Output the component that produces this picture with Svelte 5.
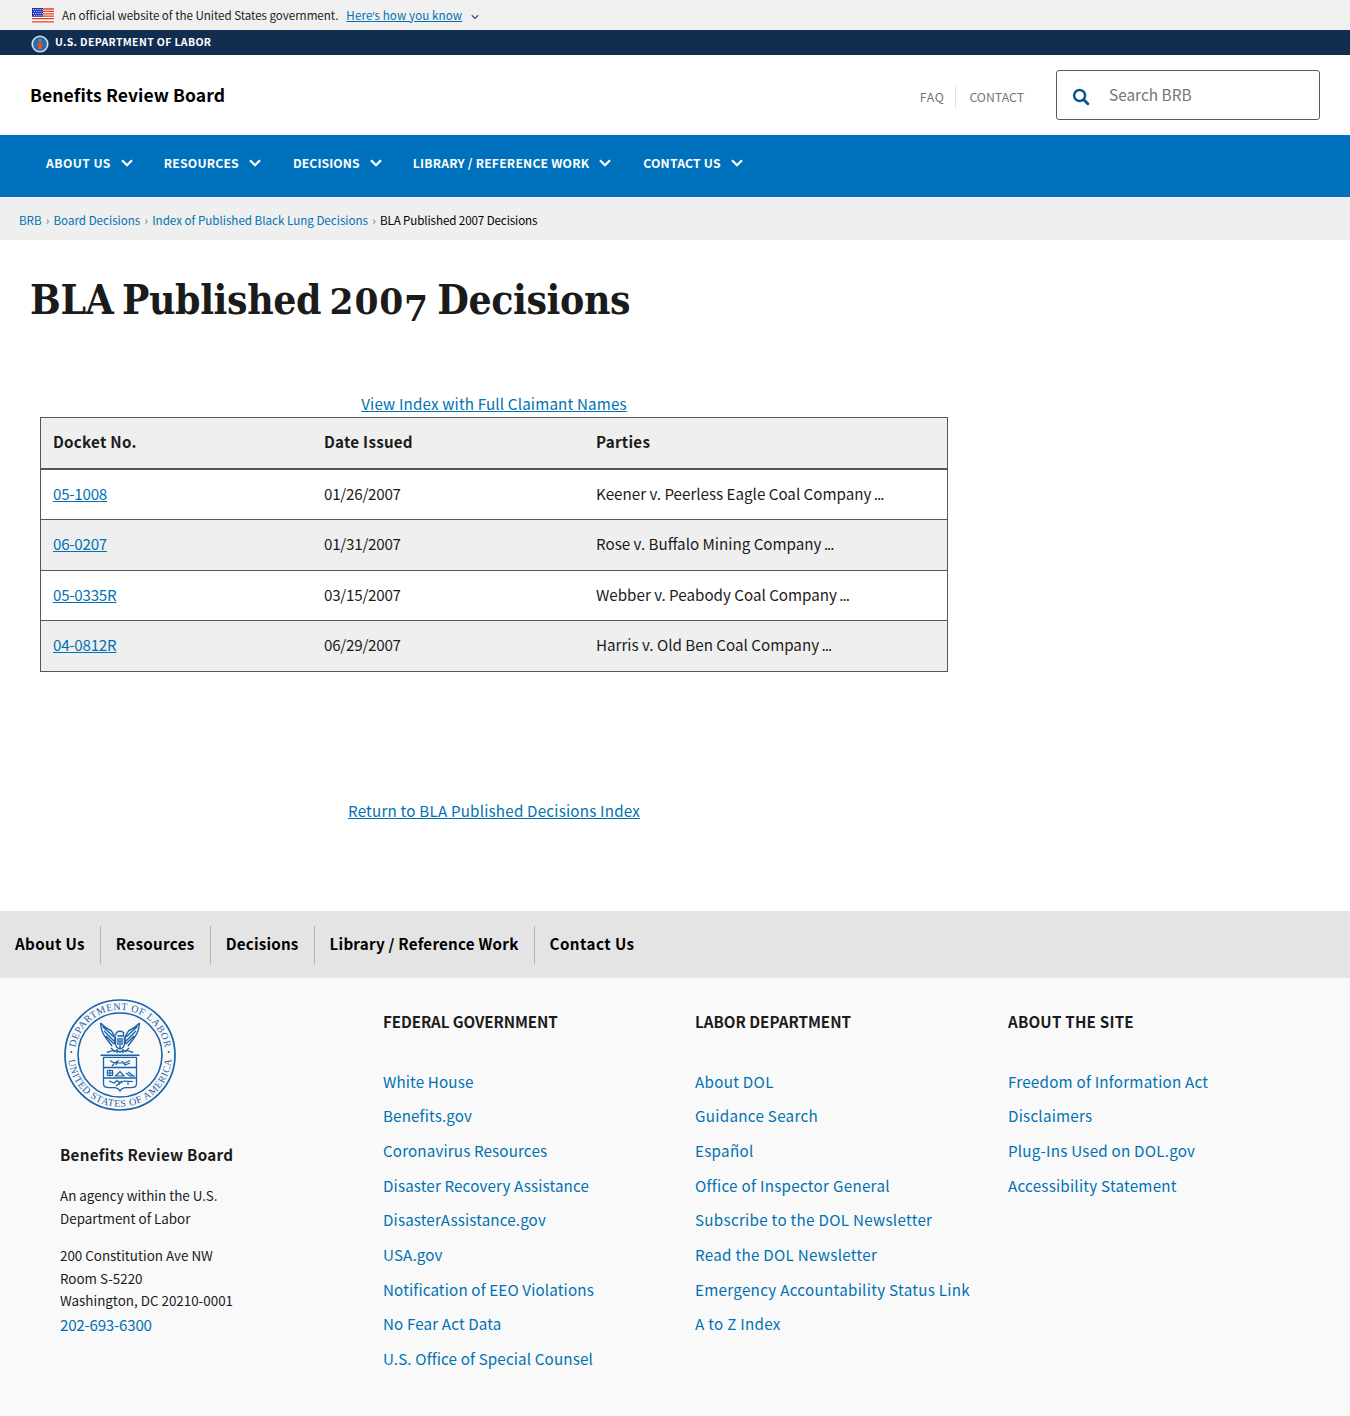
<script>
  const navItems = ['About Us', 'Resources', 'Decisions', 'Library / Reference Work', 'Contact Us'];
  const crumbs = ['BRB', 'Board Decisions', 'Index of Published Black Lung Decisions'];
  const rows = [
    ['05-1008', '01/26/2007', 'Keener v. Peerless Eagle Coal Company'],
    ['06-0207', '01/31/2007', 'Rose v. Buffalo Mining Company'],
    ['05-0335R', '03/15/2007', 'Webber v. Peabody Coal Company'],
    ['04-0812R', '06/29/2007', 'Harris v. Old Ben Coal Company']
  ];
  const columns = [
    {
      title: 'FEDERAL GOVERNMENT',
      links: ['White House', 'Benefits.gov', 'Coronavirus Resources', 'Disaster Recovery Assistance', 'DisasterAssistance.gov', 'USA.gov', 'Notification of EEO Violations', 'No Fear Act Data', 'U.S. Office of Special Counsel']
    },
    {
      title: 'LABOR DEPARTMENT',
      links: ['About DOL', 'Guidance Search', 'Español', 'Office of Inspector General', 'Subscribe to the DOL Newsletter', 'Read the DOL Newsletter', 'Emergency Accountability Status Link', 'A to Z Index']
    },
    {
      title: 'ABOUT THE SITE',
      links: ['Freedom of Information Act', 'Disclaimers', 'Plug-Ins Used on DOL.gov', 'Accessibility Statement']
    }
  ];
</script>

<div class="page">
  <div class="banner">
    <svg class="flag" viewBox="0 0 22 15">
      <rect width="22" height="15" fill="#fff" />
      <path d="M0 1H22M0 3.4H22M0 5.8H22M0 8.2H22M0 10.6H22M0 13.8H22" stroke="#db3e1f" stroke-width="1.3" />
      <rect width="11" height="8.6" fill="#1e33b1" />
      <path d="M1 1.5H11M2 3.5H11M1 5.5H11M2 7.3H11" stroke="#fff" stroke-width=".9" stroke-dasharray="1 1.2" />
    </svg>
    <span class="official">An official website of the United States government.</span>
    <a class="know" href="#know">Here<span class="quote">’</span>s how you know</a>
    <svg class="tiny" viewBox="0 0 8 6"><path d="M.8 1.2 4 4.4 7.2 1.2" fill="none" stroke="#1a5a8e" stroke-width="1.3" /></svg>
  </div>

  <div class="dept">
    <svg class="mini-seal" viewBox="0 0 18 18">
      <circle cx="9" cy="9" r="8.6" fill="#d9dde0" />
      <circle cx="9" cy="9" r="6.9" fill="#1e6fb4" />
      <path d="M5.6 5.2 8 7.2 9 4.6 10 7.2 12.4 5.2 11.4 9H6.6Z" fill="#6b6a45" />
      <path d="M6.6 8.6H11.4V13L9 14.2 6.6 13Z" fill="#e2502b" />
      <path d="M9 3.8V7" stroke="#d89a3c" />
    </svg>
    <span>U.S. DEPARTMENT OF LABOR</span>
  </div>

  <header>
    <div class="brand">Benefits Review Board</div>
    <div class="tools">
      <a class="faq" href="#faq">FAQ</a>
      <a class="contact" href="#contact">CONTACT</a>
      <div class="search">
        <svg viewBox="0 0 18 18"><circle cx="7.6" cy="7.6" r="5.5" fill="none" stroke="#0e548c" stroke-width="2.5" /><path d="m11.8 11.8 4 4" stroke="#0e548c" stroke-width="2.9" stroke-linecap="round" /></svg>
        <span>Search BRB</span>
      </div>
    </div>
  </header>

  <nav class="main-nav">
    {#each navItems as item}
      <a href="#nav">{item}<svg viewBox="0 0 12 8"><path d="M1 1.2 6 6.2 11 1.2" fill="none" stroke="#fff" stroke-width="2.3" /></svg></a>
    {/each}
  </nav>

  <div class="crumbs">
    {#each crumbs as crumb}
      <a href="#crumb">{crumb}</a><i>›</i>
    {/each}
    <span>BLA Published 2007 Decisions</span>
  </div>

  <main>
    <h1>BLA Published <span class="figures">200<span class="low">7</span></span> Decisions</h1>
    <div class="content">
      <a class="centered" href="#full">View Index with Full Claimant Names</a>
      <div class="table">
        <div class="row head"><span>Docket No.</span><span>Date Issued</span><span>Parties</span></div>
        {#each rows as row}
          <div class="row">
            <span class="num"><a href="#docket">{row[0]}</a></span>
            <span class="num">{row[1]}</span>
            <span>{row[2]} <span class="dots">...</span></span>
          </div>
        {/each}
      </div>
      <a class="centered back" href="#index">Return to BLA Published Decisions Index</a>
    </div>
  </main>

  <nav class="foot-nav">
    {#each navItems as item}<a href="#foot">{item}</a>{/each}
  </nav>

  <footer>
    <div class="agency">
      <svg class="seal" viewBox="0 0 112 112">
        <defs>
          <path id="arc-top" d="M10.8 56A45.2 45.2 0 0 1 101.2 56" />
          <path id="arc-bottom" d="M4.2 56A51.8 51.8 0 0 0 107.8 56" />
        </defs>
        <g fill="none" stroke="#1a63a8">
          <circle cx="56" cy="56" r="55" stroke-width="1.7" />
          <circle cx="56" cy="56" r="42" stroke-width="1.6" />
          <path d="M36.5 56.2H75.5M39 58.4H73" stroke-width="1.4" />
          <path d="M39.5 58.5V85Q39.5 88.6 45 88.6H50Q54 88.6 56 92 58 88.6 62 88.6H67Q72.5 88.6 72.5 85V58.5M39.5 68.5H72.5M39.5 79H72.5" stroke-width="1.3" />
          <path d="M36.5 24Q41 29 47.500 32L51 38 50.500 45M75.500 24Q71 29 64.500 32L61 38 61.500 45M36.500 24Q37 33 42 39L48 47M75.500 24Q75 33 70 39L64 47M38.500 27.500 50 38M40 32 50 42M42 37 50 45M73.500 27.500 62 38M72 32 62 42M70 37 62 45" stroke-width="1.4" />
          <path d="M52.500 33.500Q56 31 59.500 33.500V37H53.500M52.500 33.500 51.500 36.500M51.500 38V45Q52 49 56 50 60 49 60.500 45V38M54 39V46M56 39V49M58 39V46M53 50V54M59 50V54M43 53.500Q50 50 56 53 62 50 69 53.500M47 49 51 53M65 49 61 53" stroke-width="1.4" />
          <path d="M46 61.500 50 64 54 62 52 66M50 64H61L66 61.500M58 62 61 66 66 64M50 65 48 67M43.500 71.500H48.500V76.500H43.500ZM46 70.500V77.500M42.500 74H49.500M51.500 77 56 72.500 60 77ZM62 74 66 77 71 77M64 73 67 75 69 77M45 82 50 84 53 81.500 56 84 60 82 69 82.500M52 87 58 82M55 82V86M64 82V86" stroke-width="1.2" />
        </g>
        <g fill="#1a63a8" font-family="Liberation Serif, serif" font-size="10">
          <text textLength="127"><textPath href="#arc-top" startOffset="7.500" textLength="127">DEPARTMENT OF LABOR</textPath></text>
          <text textLength="153"><textPath href="#arc-bottom" startOffset="5" textLength="153">UNITED STATES OF AMERICA</textPath></text>
          <circle cx="7.3" cy="53" r="1" /><circle cx="104.7" cy="53" r="1" />
        </g>
      </svg>
      <h2>Benefits Review Board</h2>
      <p>An agency within the U.S.<br />Department of Labor</p>
      <p>200 Constitution Ave NW<br />Room S-5220<br />Washington, DC 20210-0001</p>
      <a href="#phone">202-693-6300</a>
    </div>
    {#each columns as column}
      <div class="column">
        <h3>{column.title}</h3>
        {#each column.links as link}<a href="#link">{link}</a>{/each}
      </div>
    {/each}
  </footer>
</div>

<style>
  :global(body) { margin: 0; background: #fff; }
  .page {
    width: 1350px; height: 1416px; overflow: hidden; display: flex; flex-direction: column;
    font-family: "Noto Sans CJK SC", "Open Sans", sans-serif; font-size: 15.18px; color: #1b1b1b;
  }
  .page * { box-sizing: border-box; }
  a { color: #0071b3; text-decoration: none; white-space: nowrap; }
  span { white-space: nowrap; }
  .banner { height: 30px; flex: none; background: #f0f0f0; display: flex; align-items: center; padding-left: 32px; font-size: 11.6px; line-height: 30px; }
  .official { letter-spacing: -.04px; }
  .flag { width: 22px; height: 15px; margin-right: 8px; }
  .know { margin-left: 8px; text-decoration: underline; letter-spacing: .1px; }
  .quote { font-family: "Open Sans", sans-serif; }
  .tiny { width: 8px; height: 6px; margin: 3px 0 0 8.5px; }
  .dept { height: 25px; flex: none; background: #112e51; display: flex; align-items: center; padding-left: 31px; color: #fff; font-weight: 700; font-size: 10.5px; line-height: 23px; letter-spacing: .35px; }
  .dept span { height: 25px; }
  .mini-seal { width: 18px; height: 18px; margin: 3px 6px 0 0; }
  header { height: 80px; flex: none; display: flex; align-items: center; justify-content: space-between; padding: 0 30px; }
  .brand { font-weight: 700; font-size: 17.5px; color: #000; letter-spacing: .1px; padding-bottom: 2px; }
  .tools { display: flex; align-items: center; font-size: 12.3px; }
  .tools a { color: #71767a; line-height: 25px; height: 23px; margin-top: 2px; }
  .tools .faq { padding-right: 11px; border-right: 1px solid #dfe1e2; letter-spacing: .6px; }
  .contact { margin: 0 32px 0 13px; }
  .search { width: 264px; height: 50px; border: 1px solid #565c65; border-radius: 3px; display: flex; align-items: center; padding-left: 15px; color: #757575; font-size: 15.4px; }
  .search svg { width: 18px; height: 18px; margin: 3px 19px 0 0; }
  .search span { padding-bottom: 2px; }
  .main-nav { height: 62px; flex: none; background: #0071bc; display: flex; padding: 0 30px; }
  .main-nav a { height: 56px; display: flex; align-items: center; padding: 0 16px; color: #fff; text-transform: uppercase; font-weight: 700; font-size: 12.2px; letter-spacing: .2px; }
  .main-nav a:first-child { letter-spacing: .4px; padding-right: 15px; }
  .main-nav a:nth-child(3) { letter-spacing: .1px; padding-right: 15px; }
  .main-nav svg { width: 12px; height: 8px; margin-left: 10px; }
  .crumbs { height: 43px; flex: none; background: #efefef; display: flex; align-items: center; padding: 3px 0 0 19px; font-size: 11.6px; color: #000; }
  .crumbs i { font-style: normal; color: #666; margin: 0 4.2px; }
  .crumbs span { letter-spacing: -.1px; }
  main { height: 671px; flex: none; padding: 0 30px; }
  h1 { margin: 0; padding-top: 29px; height: 150px; font: 700 40.5px/62px "DejaVu Serif Condensed", "DejaVu Serif", serif; white-space: nowrap; letter-spacing: -.4px; word-spacing: -3.8px; }
  .figures { font: 700 34.5px/40px "DejaVu Serif", serif; letter-spacing: .8px; }
  .low { position: relative; top: 7px; }
  .content { width: 908px; margin-left: 10px; }
  .centered { display: block; width: max-content; margin: 0 auto; height: 27px; line-height: 26px; text-decoration: underline; letter-spacing: .16px; }
  .back { margin-top: 125px; letter-spacing: .2px; }
  .table { height: 255px; border: 1px solid #565656; }
  .row { height: 50px; padding: 0 0 3px 12px; display: grid; grid-template-columns: 271px 272px 1fr; align-items: center; border-bottom: 1px solid #565656; line-height: 24px; }
  .row:nth-child(odd) { background: #efefef; height: 51px; padding-bottom: 5px; }
  .row.head { height: 52px; border-bottom-width: 2px; font-weight: 700; letter-spacing: .25px; }
  .row:last-child { border-bottom: 0; height: 50px; }
  .row a { text-decoration: underline; }
  .num { letter-spacing: -.25px; }
  .dots { letter-spacing: -1px; margin-left: -1px; }
  .foot-nav { height: 67px; flex: none; background: #e4e4e4; display: flex; align-items: center; font-weight: 700; letter-spacing: .32px; }
  .foot-nav a { height: 38px; line-height: 35px; padding: 0 15px; color: #000; border-right: 1px solid #b5b5b5; }
  .foot-nav a:nth-child(3) { letter-spacing: .2px; }
  .foot-nav a:nth-child(4) { letter-spacing: .22px; }
  .foot-nav a:last-child { border: 0; letter-spacing: .45px; }
  footer { flex: 1; background: #f9f9f9; display: grid; grid-template-columns: 323px 312px 313px 1fr; padding-left: 60px; }
  .agency { padding-top: 20.5px; display: flex; flex-direction: column; font-size: 13.4px; line-height: 22.5px; }
  .seal { width: 112px; height: 112px; margin-left: 4px; }
  h2 { margin: 31.5px 0 18px; font-size: 15.18px; line-height: 24px; letter-spacing: .28px; }
  p { margin: 0 0 15px; }
  .agency p + p { margin-bottom: 0; }
  .agency a { font-size: 15.18px; line-height: 24px; letter-spacing: -.25px; }
  .column { padding-top: 31px; display: flex; flex-direction: column; letter-spacing: .14px; }
  .column:nth-child(3) { letter-spacing: .29px; }
  .column:nth-child(4) { letter-spacing: .23px; }
  h3 { margin: 0 0 30.8px; font-size: 15.18px; line-height: 24px; letter-spacing: 0; }
  .column:nth-child(2) h3 { letter-spacing: -.1px; }
  .column:nth-child(4) h3 { letter-spacing: .2px; }
  .column a { line-height: 34.65px; }
</style>
